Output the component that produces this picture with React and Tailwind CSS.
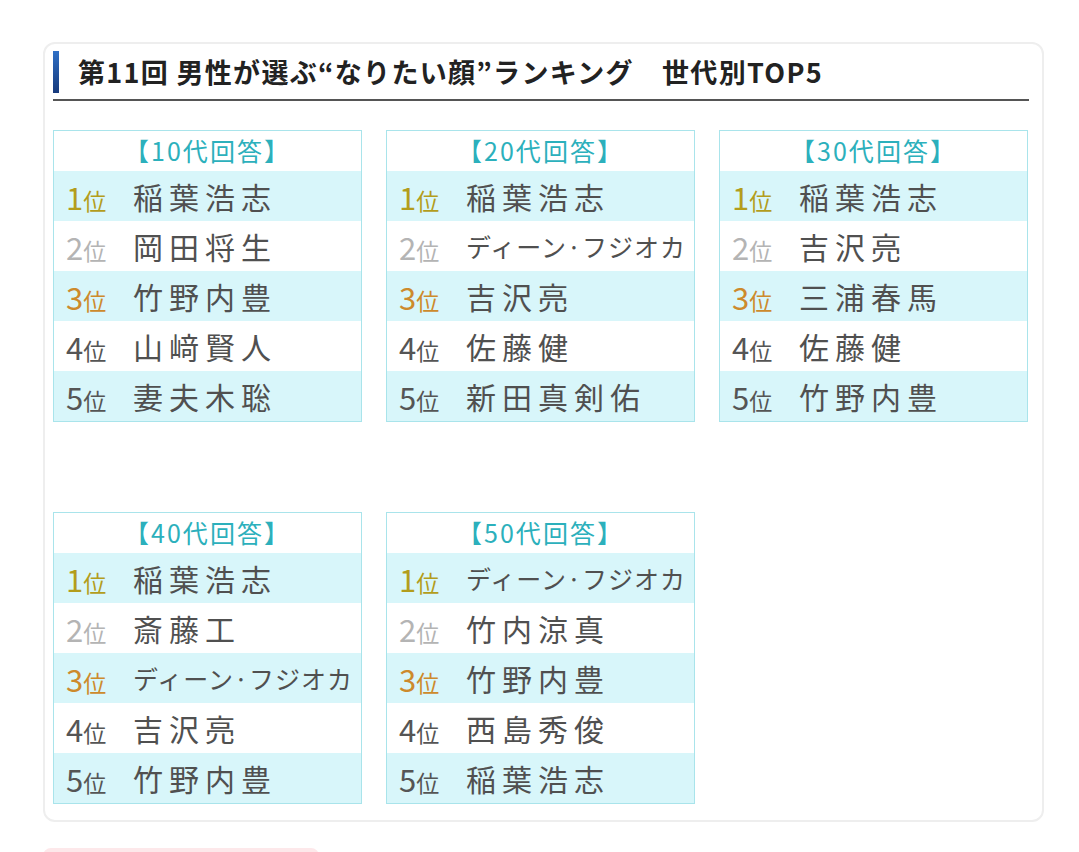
const groups = [
  {
    label: "10代",
    names: ["稲葉浩志", "岡田将生", "竹野内豊", "山﨑賢人", "妻夫木聡"],
  },
  {
    label: "20代",
    names: ["稲葉浩志", "ディーン·フジオカ", "吉沢亮", "佐藤健", "新田真剣佑"],
  },
  {
    label: "30代",
    names: ["稲葉浩志", "吉沢亮", "三浦春馬", "佐藤健", "竹野内豊"],
  },
  {
    label: "40代",
    names: ["稲葉浩志", "斎藤工", "ディーン·フジオカ", "吉沢亮", "竹野内豊"],
  },
  {
    label: "50代",
    names: ["ディーン·フジオカ", "竹内涼真", "竹野内豊", "西島秀俊", "稲葉浩志"],
  },
];

const rankColors = [
  "text-[#b39d1c]",
  "text-[#b4b4b4]",
  "text-[#cd8a2c]",
  "text-[#555555]",
  "text-[#555555]",
];

function RankTable({ label, names }) {
  return (
    <div className="border border-[#a9e4eb] bg-white">
      <div className="h-[40px] flex items-center justify-center text-[25px] tracking-[2px] text-[#2cb0bc]">
        【{label}回答】
      </div>
      {names.map((name, i) => {
        const long = name.length > 6;
        return (
          <div
            key={i}
            className={
              "h-[50px] flex items-center pl-[12px] " +
              (i % 2 === 0 ? "bg-[#d8f6fa]" : "bg-white")
            }
          >
            <div className={"w-[67px] flex items-baseline " + rankColors[i]}>
              <span className="text-[31px] leading-none">{i + 1}</span>
              <span className="text-[23px] leading-none">位</span>
            </div>
            {long ? (
              <span className="text-[25px] leading-none text-[#505050] tracking-[1px]">
                {name}
              </span>
            ) : (
              <span className="text-[30px] leading-none text-[#505050] tracking-[6px]">
                {name}
              </span>
            )}
          </div>
        );
      })}
    </div>
  );
}

export default function App() {
  return (
    <div
      className="w-[1079px] h-[852px] bg-white overflow-hidden pt-[42px] pl-[43px]"
      style={{ fontFamily: '"Noto Sans CJK JP", "Noto Sans", sans-serif' }}
    >
      <div className="w-[1001px] border-2 border-[#eeeeee] rounded-[12px] pt-[7px] pb-[16px] pl-[8px] pr-[13px]">
        {/* 見出し */}
        <div className="flex items-start border-b-2 border-[#555555] pb-[6px]">
          <div className="w-[6px] h-[42px] bg-gradient-to-b from-[#2f70c6] to-[#173a7c]" />
          <h2 className="ml-[19px] h-[42px] flex items-center text-[27px] font-bold text-[#222222] tracking-[1.3px]">
            第11回 男性が選ぶ“なりたい顔”ランキング　世代別TOP5
          </h2>
        </div>

        <div className="grid grid-cols-3 gap-x-[24px] gap-y-[90px] mt-[29px] w-[975px]">
          {groups.map((g) => (
            <RankTable key={g.label} label={g.label} names={g.names} />
          ))}
        </div>
      </div>

      <div className="mt-[26px] w-[276px] h-[20px] bg-[#fde8ea] rounded-t-[8px]" />
    </div>
  );
}
